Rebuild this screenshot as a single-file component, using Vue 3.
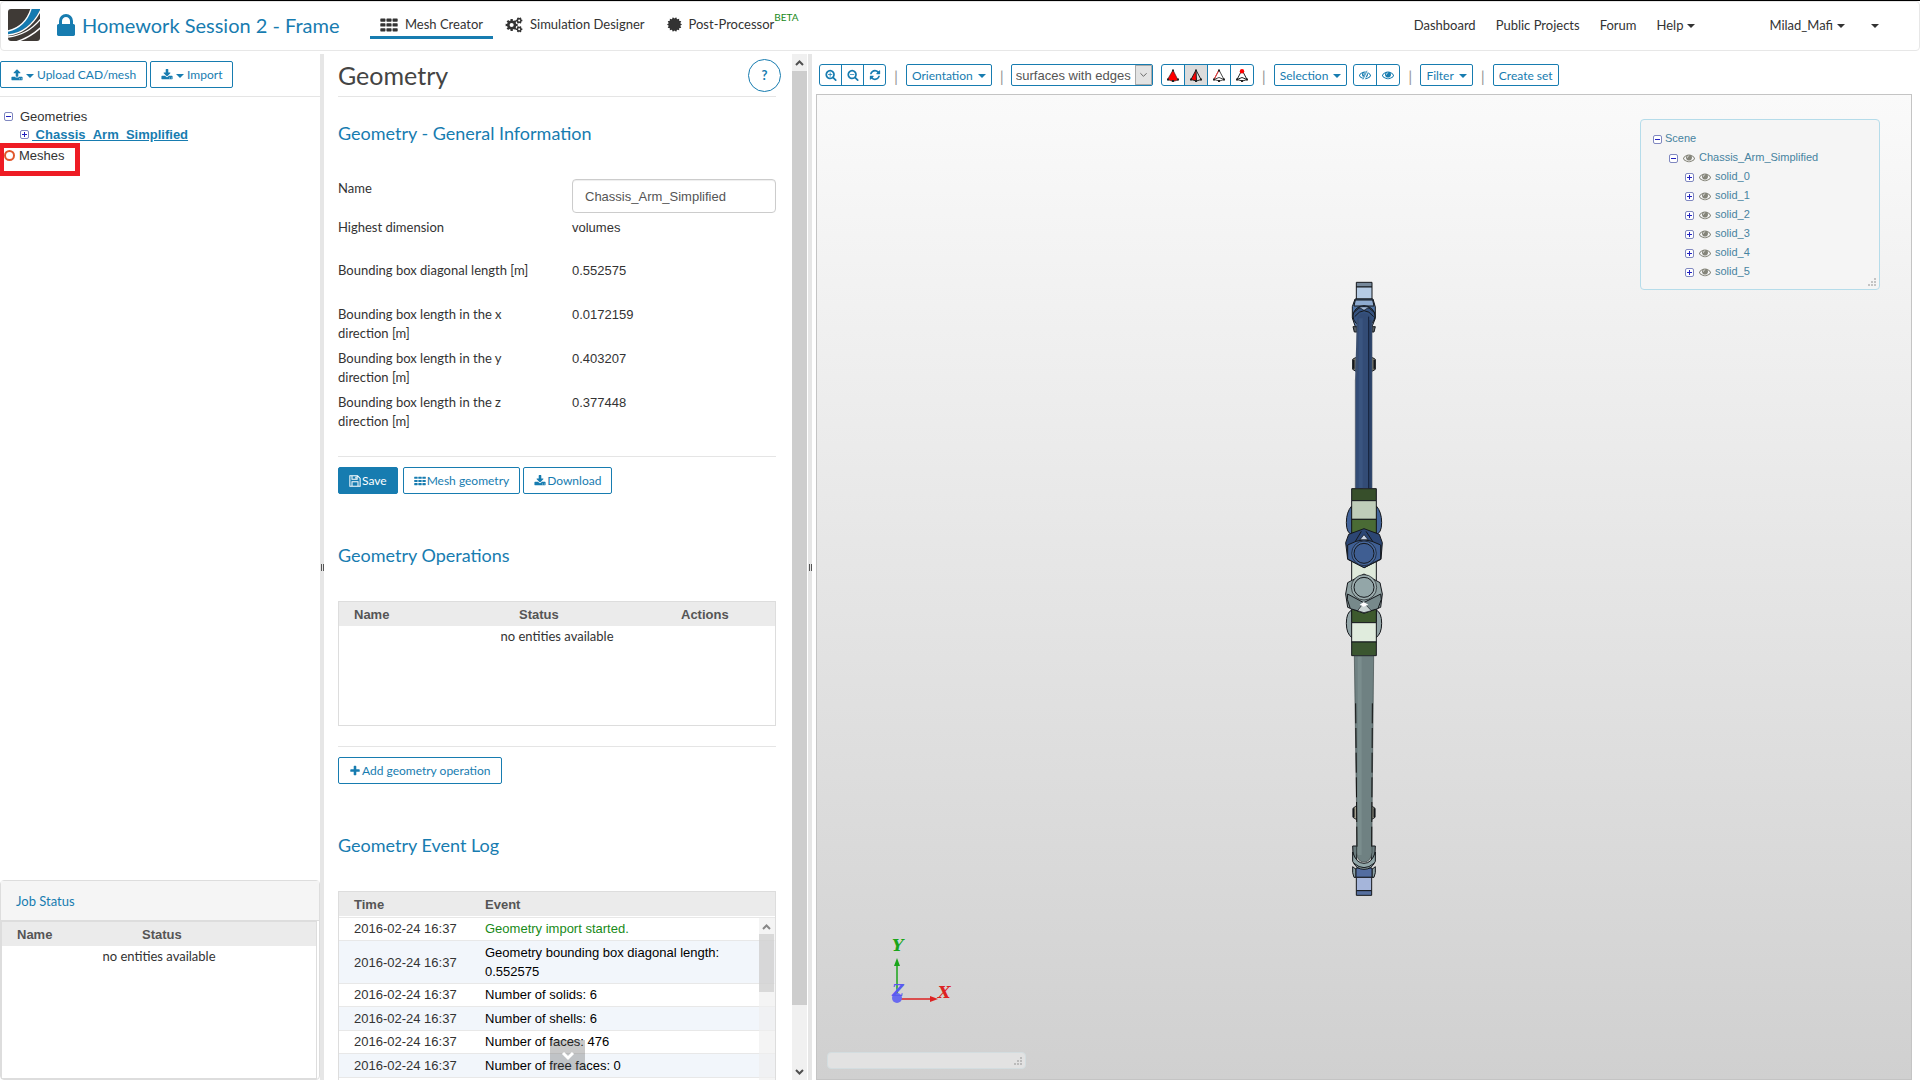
<script setup>
import { h, ref } from 'vue'

const paths = {
  lock: 'M320 768h512v-192q0-106-75-181t-181-75-181 75-75 181v192zm832 96v576q0 40-28 68t-68 28h-960q-40 0-68-28t-28-68v-576q0-40 28-68t68-28h32v-192q0-184 132-316t316-132 316 132 132 316v192h32q40 0 68 28t28 68z',
  upload: 'M1344 1472q0-26-19-45t-45-19-45 19-19 45 19 45 45 19 45-19 19-45zm256 0q0-26-19-45t-45-19-45 19-19 45 19 45 45 19 45-19 19-45zm128-224v320q0 40-28 68t-68 28h-1472q-40 0-68-28t-28-68v-320q0-40 28-68t68-28h427q21 56 70.5 92t110.5 36h256q61 0 110.5-36t70.5-92h427q40 0 68 28t28 68zm-325-648q-17 40-59 40h-256v448q0 26-19 45t-45 19h-256q-26 0-45-19t-19-45v-448h-256q-42 0-59-40-17-39 14-69l448-448q18-19 45-19t45 19l448 448q31 30 14 69z',
  download: 'M1344 1344q0-26-19-45t-45-19-45 19-19 45 19 45 45 19 45-19 19-45zm256 0q0-26-19-45t-45-19-45 19-19 45 19 45 45 19 45-19 19-45zm128-224v320q0 40-28 68t-68 28h-1472q-40 0-68-28t-28-68v-320q0-40 28-68t68-28h465l135 136q58 56 136 56t136-56l136-136h464q40 0 68 28t28 68zm-325-569q17 41-14 70l-448 448q-18 19-45 19t-45-19l-448-448q-31-29-14-70 17-39 59-39h256v-448q0-26 19-45t45-19h256q26 0 45 19t19 45v448h256q42 0 59 39z',
  zoomIn: 'M1088 800v64q0 13-9.5 22.5t-22.5 9.5h-224v224q0 13-9.5 22.5t-22.5 9.5h-64q-13 0-22.5-9.5t-9.5-22.5v-224h-224q-13 0-22.5-9.5t-9.5-22.5v-64q0-13 9.5-22.5t22.5-9.5h224v-224q0-13 9.5-22.5t22.5-9.5h64q13 0 22.5 9.5t9.5 22.5v224h224q13 0 22.5 9.5t9.5 22.5zm128 32q0-185-131.5-316.5t-316.5-131.5-316.5 131.5-131.5 316.5 131.5 316.5 316.5 131.5 316.5-131.5 131.5-316.5zm512 832q0 53-37.5 90.5t-90.5 37.5q-54 0-90-38l-343-342q-179 124-399 124-143 0-273.5-55.5t-225-150-150-225-55.5-273.5 55.5-273.5 150-225 225-150 273.5-55.5 273.5 55.5 225 150 150 225 55.5 273.5q0 220-124 399l343 343q37 37 37 90z',
  zoomOut: 'M1088 800v64q0 13-9.5 22.5t-22.5 9.5h-576q-13 0-22.5-9.5t-9.5-22.5v-64q0-13 9.5-22.5t22.5-9.5h576q13 0 22.5 9.5t9.5 22.5zm128 32q0-185-131.5-316.5t-316.5-131.5-316.5 131.5-131.5 316.5 131.5 316.5 316.5 131.5 316.5-131.5 131.5-316.5zm512 832q0 53-37.5 90.5t-90.5 37.5q-54 0-90-38l-343-342q-179 124-399 124-143 0-273.5-55.5t-225-150-150-225-55.5-273.5 55.5-273.5 150-225 225-150 273.5-55.5 273.5 55.5 225 150 150 225 55.5 273.5q0 220-124 399l343 343q37 37 37 90z',
  refresh: 'M1639 1056q0 5-1 7-64 268-268 434.5t-478 166.5q-146 0-282.5-55t-243.5-157l-129 129q-19 19-45 19t-45-19-19-45v-448q0-26 19-45t45-19h448q26 0 45 19t19 45-19 45l-137 137q71 66 161 102t187 36q134 0 250-65t186-179q11-17 53-117 8-23 30-23h192q13 0 22.5 9.5t9.5 22.5zm25-800v448q0 26-19 45t-45 19h-448q-26 0-45-19t-19-45 19-45l138-138q-148-137-349-137-134 0-250 65t-186 179q-11 17-53 117-8 23-30 23h-199q-13 0-22.5-9.5t-9.5-22.5v-7q65-268 270-434.5t480-166.5q146 0 284 55.5t245 156.5l130-129q19-19 45-19t45 19 19 45z',
  eye: 'M1664 960q-152-236-381-353 61 104 61 225 0 185-131.5 316.5t-316.5 131.5-316.5-131.5-131.5-316.5q0-121 61-225-229 117-381 353 133 205 333.5 326.5t434.5 121.5 434.5-121.5 333.5-326.5zm-720-384q0-20-14-34t-34-14q-125 0-214.5 89.5t-89.5 214.5q0 20 14 34t34 14 34-14 14-34q0-86 61-147t147-61q20 0 34-14t14-34zm848 384q0 34-20 69-140 230-376.5 368.5t-499.5 138.5-499.5-139-376.5-368q-20-35-20-69t20-69q140-229 376.5-368t499.5-139 499.5 139 376.5 368q20 35 20 69z',
  th: 'M96 256h384q64 0 64 64v192q0 64-64 64h-384q-64 0-64-64v-192q0-64 64-64zm608 0h384q64 0 64 64v192q0 64-64 64h-384q-64 0-64-64v-192q0-64 64-64zm608 0h384q64 0 64 64v192q0 64-64 64h-384q-64 0-64-64v-192q0-64 64-64zM96 736h384q64 0 64 64v192q0 64-64 64h-384q-64 0-64-64v-192q0-64 64-64zm608 0h384q64 0 64 64v192q0 64-64 64h-384q-64 0-64-64v-192q0-64 64-64zm608 0h384q64 0 64 64v192q0 64-64 64h-384q-64 0-64-64v-192q0-64 64-64zM96 1216h384q64 0 64 64v192q0 64-64 64h-384q-64 0-64-64v-192q0-64 64-64zm608 0h384q64 0 64 64v192q0 64-64 64h-384q-64 0-64-64v-192q0-64 64-64zm608 0h384q64 0 64 64v192q0 64-64 64h-384q-64 0-64-64v-192q0-64 64-64z',
  plus: 'M1600 736v192q0 40-28 68t-68 28h-416v416q0 40-28 68t-68 28h-192q-40 0-68-28t-28-68v-416h-416q-40 0-68-28t-28-68v-192q0-40 28-68t68-28h416v-416q0-40 28-68t68-28h192q40 0 68 28t28 68v416h416q40 0 68 28t28 68z'
}

const Icon = (props) =>
  h('svg', { viewBox: props.box || '0 0 1792 1792', 'aria-hidden': 'true' }, [h('path', { d: paths[props.name], fill: 'currentColor' })])
Icon.props = ['name', 'box']

// Toothed outline used by the gear and the seal
function teeth(cx, cy, outer, inner, count, flat) {
  const pts = []
  const step = (Math.PI * 2) / count
  for (let i = 0; i < count; i++) {
    const a = i * step
    for (const [o, r] of flat
      ? [[-0.25, outer], [0.25, outer], [0.3, inner], [0.7, inner]]
      : [[0, outer], [0.5, inner]]) {
      pts.push(`${(cx + Math.cos(a + o * step) * r).toFixed(2)} ${(cy + Math.sin(a + o * step) * r).toFixed(2)}`)
    }
  }
  return 'M' + pts.join('L') + 'Z'
}
const hole = (cx, cy, r) => `M${cx - r} ${cy}a${r} ${r} 0 1 0 ${2 * r} 0a${r} ${r} 0 1 0 ${-2 * r} 0Z`
const gears =
  teeth(6.5, 8.5, 6.5, 5, 8, true) + hole(6.5, 8.5, 2.2) +
  teeth(14.5, 3.7, 3.5, 2.7, 6, true) + hole(14.5, 3.7, 1.1) +
  teeth(14.5, 13, 3.5, 2.7, 6, true) + hole(14.5, 13, 1.1)
const seal = teeth(8, 8, 8, 6.3, 14, false)

const name = ref('Chassis_Arm_Simplified')
const display = ref('surfaces with edges')
const facts = [
  ['Highest dimension', 'volumes'],
  ['Bounding box diagonal length [m]', '0.552575'],
  ['Bounding box length in the x direction [m]', '0.0172159'],
  ['Bounding box length in the y direction [m]', '0.403207'],
  ['Bounding box length in the z direction [m]', '0.377448']
]
const events = [
  'Geometry import started.',
  'Geometry bounding box diagonal length: 0.552575',
  'Number of solids: 6',
  'Number of shells: 6',
  'Number of faces: 476',
  'Number of free faces: 0'
]
const solids = ['solid_0', 'solid_1', 'solid_2', 'solid_3', 'solid_4', 'solid_5']
</script>

<template>
  <div class="page">
    <header class="topbar">
      <svg class="logo" viewBox="0 0 96 96" aria-hidden="true">
        <rect width="96" height="96" rx="9" fill="#3f3a36" />
        <path d="M0 66C34 58 58 34 69 0H96V3C76 44 44 72 0 77Z" fill="#147ab0" />
        <path d="M0 66C34 58 58 34 69 0M0 78C44 74 76 46 98 4M0 84C42 80 72 62 98 30M26 98C52 90 76 76 98 56" fill="none" stroke="#fff" stroke-width="4" />
      </svg>
      <Icon class="lock" name="lock" box="0 128 1152 1408" />
      <a class="project" href="#">Homework Session 2 - Frame</a>
      <nav class="modes">
        <a class="mode on" href="#"><Icon class="mode-icon" name="th" box="0 200 1792 1400" />Mesh Creator</a>
        <a class="mode" href="#"><svg class="mode-icon" viewBox="0 0 18 17" aria-hidden="true"><path :d="gears" fill="currentColor" fill-rule="evenodd" /></svg>Simulation Designer</a>
        <a class="mode" href="#"><svg class="seal" viewBox="0 0 16 16" aria-hidden="true"><path :d="seal" fill="currentColor" /></svg>Post-Processor<sup class="beta">BETA</sup></a>
      </nav>
      <nav class="links">
        <a href="#">Dashboard</a>
        <a href="#">Public Projects</a>
        <a href="#">Forum</a>
        <a href="#">Help<i class="caret"></i></a>
        <a class="user" href="#">Milad_Mafi<i class="caret"></i></a>
        <a class="more" href="#" aria-label="More"><i class="caret"></i></a>
      </nav>
    </header>

    <main class="columns">
      <aside class="left">
        <div class="left-tools">
          <button class="btn"><Icon class="ic" name="upload" /><i class="caret"></i>Upload CAD/mesh</button>
          <button class="btn"><Icon class="ic" name="download" /><i class="caret"></i>Import</button>
        </div>
        <div class="tree">
          <div class="node"><i class="box minus"></i>Geometries</div>
          <div class="node child"><i class="box"></i><a class="geo" href="#">&nbsp;Chassis_Arm_Simplified</a></div>
          <div class="node meshes"><i class="ring"></i>Meshes</div>
        </div>
        <section class="jobs">
          <h4>Job Status</h4>
          <div class="grid-box jobs-box">
            <table>
              <thead><tr><th class="job-name">Name</th><th>Status</th></tr></thead>
              <tbody><tr><td class="none" colspan="2">no entities available</td></tr></tbody>
            </table>
          </div>
        </section>
      </aside>

      <div class="splitter"><i class="grip"></i></div>

      <section class="middle">
        <div class="sheet">
          <div class="sheet-head">
            <h1>Geometry</h1>
            <button class="help" aria-label="Help">?</button>
          </div>
          <h2>Geometry - General Information</h2>
          <div class="form">
            <label for="geo-name">Name</label>
            <input id="geo-name" v-model="name" type="text" />
            <template v-for="f in facts" :key="f[0]">
              <span class="key">{{ f[0] }}</span>
              <span class="val">{{ f[1] }}</span>
            </template>
          </div>
          <div class="actions">
            <button class="btn solid"><svg class="ic" viewBox="0 0 14 14" aria-hidden="true"><path d="M1 1H10L13 4V13H1ZM3.500 1V5H9.500V1M3.500 13V8H10.500V13M8 2V4" fill="none" stroke="currentColor" stroke-width="1.200" /></svg>Save</button>
            <button class="btn"><Icon class="ic" name="th" box="0 200 1792 1400" />Mesh geometry</button>
            <button class="btn"><Icon class="ic" name="download" />Download</button>
          </div>

          <h2>Geometry Operations</h2>
          <div class="grid-box ops">
            <table>
              <thead><tr><th class="op-name">Name</th><th class="op-status">Status</th><th>Actions</th></tr></thead>
              <tbody><tr><td class="none" colspan="3">no entities available</td></tr></tbody>
            </table>
          </div>
          <div class="actions add">
            <button class="btn"><Icon class="ic" name="plus" />Add geometry operation</button>
          </div>

          <h2>Geometry Event Log</h2>
          <div class="grid-box log">
            <table>
              <thead><tr><th class="time">Time</th><th>Event</th></tr></thead>
              <tbody>
                <tr v-for="(e, i) in events" :key="e">
                  <td class="stamp">2016-02-24 16:37</td>
                  <td class="event" :class="{ good: i === 0 }">{{ e }}</td>
                </tr>
              </tbody>
            </table>
            <div class="log-scroll">
              <svg viewBox="0 0 15 16" aria-hidden="true"><path d="M4 11L7.500 7.500L11 11" fill="none" stroke="#888" stroke-width="2" /></svg>
              <div class="log-thumb"></div>
            </div>
          </div>
        </div>
        <button class="scroll-hint" aria-label="Scroll down"><svg viewBox="0 0 14 10" aria-hidden="true"><path d="M2 2L7 7L12 2" fill="none" stroke="#fff" stroke-width="3" /></svg></button>
        <div class="scrollbar">
          <svg viewBox="0 0 15 17" aria-hidden="true"><path d="M4 11L7.500 7.500L11 11" fill="none" stroke="#505050" stroke-width="2" /></svg>
          <div class="thumb"></div>
          <svg viewBox="0 0 15 17" aria-hidden="true"><path d="M4 7L7.500 10.500L11 7" fill="none" stroke="#505050" stroke-width="2" /></svg>
        </div>
      </section>

      <div class="splitter"><i class="grip"></i></div>

      <section class="viewer">
        <div class="toolbar">
          <div class="group">
            <button aria-label="Zoom in"><Icon class="gi" name="zoomIn" /></button>
            <button aria-label="Zoom out"><Icon class="gi" name="zoomOut" /></button>
            <button aria-label="Refresh"><Icon class="gi" name="refresh" /></button>
          </div>
          <span class="bar">|</span>
          <button class="btn sm">Orientation<i class="caret"></i></button>
          <span class="bar">|</span>
          <div class="pick">
            <select v-model="display" aria-label="Display mode"><option>surfaces with edges</option></select>
            <svg viewBox="0 0 17 20" aria-hidden="true"><path d="M5 8L8.500 11.500L12 8" fill="none" stroke="#555" /></svg>
          </div>
          <div class="group wide">
            <button aria-label="Select volumes"><svg class="tet" viewBox="0 0 14 13"><path d="M7 1L12 11L7 12.500L1.500 10.500Z" fill="#f00" stroke="#222" stroke-width=".6" /><path d="M1 9.500h2v2h-2zM6 11h2v2h-2zM11 9.500h2v2h-2zM6 .5h2v2h-2z" fill="#222" /></svg></button>
            <button class="on" aria-label="Select faces"><svg class="tet" viewBox="0 0 14 13"><path d="M7 1L7.500 12L2 10.500Z" fill="#f00" /><path d="M7 1L12 10.500L7.500 12L2 10.500ZM7 1L7.500 12" fill="none" stroke="#222" /><path d="M1 9.500h2v2h-2zM6 11h2v2h-2zM11 9.500h2v2h-2zM6 .5h2v2h-2z" fill="#222" /></svg></button>
            <button aria-label="Select edges"><svg class="tet" viewBox="0 0 14 13"><path d="M7 1L12 10.500L7.500 12L2 10.500ZM2 10.500L7 8.500L12 10.500" fill="none" stroke="#333" stroke-width=".9" /><path d="M7 1L2 10.500" stroke="#f33" /><path d="M1 9.500h2v2h-2zM6 11h2v2h-2zM11 9.500h2v2h-2zM6 .5h2v2h-2z" fill="#222" /></svg></button>
            <button aria-label="Select vertices"><svg class="tet" viewBox="0 0 14 13"><path d="M7 1L12 10.500L7.500 12L2 10.500ZM2 10.500L7 8.500L12 10.500" fill="none" stroke="#222" /><path d="M1 9.500h2v2h-2zM6 11h2v2h-2zM11 9.500h2v2h-2z" fill="#222" /><circle cx="7" cy="2.200" r="2.200" fill="#f00" /></svg></button>
          </div>
          <span class="bar">|</span>
          <button class="btn sm">Selection<i class="caret"></i></button>
          <div class="group eyes">
            <button aria-label="Hide"><svg class="gi" viewBox="0 0 1792 1792"><path :d="paths.eye" fill="currentColor" /><path d="M1250 260L640 1640" stroke="#fff" stroke-width="300" /><path d="M1200 260L590 1560" stroke="currentColor" stroke-width="120" /></svg></button>
            <button aria-label="Show"><Icon class="gi" name="eye" /></button>
          </div>
          <span class="bar">|</span>
          <button class="btn sm">Filter<i class="caret"></i></button>
          <span class="bar">|</span>
          <button class="btn sm">Create set</button>
        </div>

        <div class="canvas">
          <svg class="model" viewBox="42 30 180 1848" aria-label="Chassis arm model">
            <g stroke="#15181c" stroke-width="3">
              <!-- upper end -->
              <path d="M99 170h12v16h-8zM156 170h10l-4 16h-6z" fill="#555c60" />
              <path d="M98 268l8-5h10v40h-10l-8-5zM166 268l-8-5h-8v40h8l8-5z" fill="#77756a" />
              <path d="M101 270v26M163 270v26" stroke-width="5" />
              <path d="M109 37h47v14h-47z" fill="#76889a" />
              <path d="M109 51h47v36h-47z" fill="#b5cbe4" />
              <path d="M105 87h54l7 24v34l-10 25h-50l-9-26v-34z" fill="#5275a5" />
              <path d="M106 90h52l4 18h-60z" fill="#8eaacf" />
              <ellipse cx="132" cy="138" rx="33" ry="31" fill="#35527f" />
              <path d="M101 128q30-36 63 0M104 140q28-36 57 0" fill="none" />
              <path d="M118 112l14 9 14-9" fill="#a9bedb" stroke-width="2" />
              <path d="M111 150q3-20 21-20t24 20V655H106V300Z" fill="#334c76" stroke="none" />
              <path d="M111 150V300L106 330V655M156 150V655" fill="none" stroke-width="2" stroke="#4a5563" />
              <path d="M151 150V655" stroke="#2b4268" stroke-width="7" />
              <path d="M146 140V655" fill="none" stroke="#14213a" />
              <path d="M122 145V655" stroke="#3a5580" stroke-width="12" />
              <!-- centre joint -->
              <path d="M95 708q-16 18-16 50t18 36zM169 708q16 18 16 50t-18 36z" fill="#43649a" />
              <path d="M95 1020q-16 8-16 40t18 44zM169 1020q16 8 16 40t-18 44z" fill="#93a5a7" />
              <path d="M95 656h74v36h-74z" fill="#374f2b" />
              <path d="M95 692h74v56h-74z" fill="#bfcdb9" />
              <path d="M95 748h74v42h-74z" fill="#4a6b35" />
              <path d="M95 790h74v225h-74z" fill="#dfeadb" />
              <path d="M95 1012h74v46h-74z" fill="#3d5a2d" />
              <path d="M95 1058h74v58h-74z" fill="#e0ecdd" />
              <path d="M95 1116h74v41h-74z" fill="#3b5630" />
              <path d="M132 776l46 17 9 25-4 50-50 25-50-25-6-50 9-25z" fill="#2c4674" />
              <path d="M83 825l25-11 24-5 24 5 26 11v42l-50 26-49-26z" fill="#3f5f94" />
              <path d="M124 784l-18 30M138 784l20 30" fill="none" />
              <path d="M132 794l12 15h-24z" fill="#cbd5e5" stroke-width="2" />
              <circle cx="132" cy="850" r="37" fill="#47689d" stroke-width="2" />
              <circle cx="132" cy="850" r="30" fill="#3f5e92" />
              <path d="M132 912l48 26 7 34-5 40-50 18-49-18-6-40 6-34z" fill="#8fa1a2" />
              <path d="M83 972l48 26 51-26 2 16-10 28-42 12-41-12-9-28z" fill="#77898b" />
              <path d="M131 998l-18 24 19 6 22-6z" fill="#c9d3d2" stroke-width="2" />
              <path d="M131 996l-12 8 12 6 14-6z" fill="#fff" stroke="none" />
              <circle cx="132" cy="952" r="38" fill="#9cadae" stroke-width="2" />
              <circle cx="132" cy="952" r="30" fill="#93a6a8" />
              <!-- lower tube and end -->
              <path d="M99 1615l8-6h10v38h-10l-8-5zM165 1615l-8-6h-8v38h8l8-5z" fill="#a39f8e" />
              <path d="M101 1615v26M163 1615v26" stroke-width="5" />
              <path d="M98 1728h12v60l-10-14zM166 1728h-12v60l10-14z" fill="#6b7c7e" />
              <path d="M98 1790l10 8v24h-6l-4-14zM166 1790l-10 8v24h6l4-14z" fill="#8a9fa3" />
              <path d="M108 1794h48v28h-48z" fill="#536da0" />
              <path d="M109 1822h46v40h-46z" fill="#a5b5da" />
              <path d="M109 1862h46v14h-46z" fill="#566f9f" />
              <path d="M98 1746q10 34 34 34t34-34v28q-10 24-34 24t-34-24z" fill="#91a6a8" />
              <path d="M103 1158h58l-5 480v110q-4 28-24 28t-22-28V1638Z" fill="#6f8182" stroke="#3d4849" stroke-width="2" />
              <path d="M119 1160V1755" stroke="#7a8d8d" stroke-width="12" />
              <path d="M107 1300L111 1740M157 1300L155 1740" stroke="#111" stroke-dasharray="60 14" />
              <path d="M102 1780q30 26 60 0" fill="none" />
            </g>
          </svg>

          <svg class="axes" viewBox="0 0 70 76" aria-hidden="true">
            <path d="M9 60V26" stroke="#1aa51a" stroke-width="1.500" /><path d="M6 30L9 22L12 30Z" fill="#1aa51a" />
            <path d="M9 63H46" stroke="#d22" stroke-width="1.500" /><path d="M42 60L50 63L42 66Z" fill="#d22" />
            <circle cx="9" cy="62" r="5" fill="#6a6af0" />
            <text x="4" y="15" fill="#1aa51a">Y</text>
            <text x="50" y="62" fill="#d22">X</text>
            <text x="4" y="60" fill="#5a5af0">Z</text>
          </svg>

          <div class="scene">
            <div class="srow"><i class="box minus"></i>Scene</div>
            <div class="srow l1"><i class="box minus"></i><Icon class="seye" name="eye" />Chassis_Arm_Simplified</div>
            <div v-for="s in solids" :key="s" class="srow l2"><i class="box"></i><Icon class="seye" name="eye" />{{ s }}</div>
            <svg class="resize" viewBox="0 0 8 8" aria-hidden="true"><path d="M6 0h2v2h-2zM3 3h2v2h-2zM6 3h2v2h-2zM0 6h2v2h-2zM3 6h2v2h-2zM6 6h2v2h-2z" fill="#c4c4c4" /></svg>
          </div>
          <div class="message">
            <svg class="resize" viewBox="0 0 8 8" aria-hidden="true"><path d="M6 0h2v2h-2zM3 3h2v2h-2zM6 3h2v2h-2zM0 6h2v2h-2zM3 6h2v2h-2zM6 6h2v2h-2z" fill="#bbb" /></svg>
          </div>
        </div>
      </section>
    </main>
    <div class="mark" aria-hidden="true"></div>
  </div>
</template>

<style>
body { margin: 0; overflow: hidden; }
</style>

<style scoped>
* { box-sizing: border-box; }
.page { position: relative; display: flex; flex-direction: column; height: 100vh; border-top: 1px solid #000; background: #fff; color: #333; font: 13px/19px Lato, sans-serif; }
a { color: inherit; text-decoration: none; }
button, input, select { font: inherit; }
h1, h2, h4 { margin: 0; font-weight: 400; }
.caret { display: inline-block; margin-top: 2px; border: 4px solid transparent; border-top-color: currentColor; border-bottom: 0; }

.topbar { display: flex; align-items: center; flex: none; height: 50px; padding: 0 0 2px 7px; border: 1px solid #e7e7e7; border-radius: 4px; }
.logo { width: 32px; height: 32px; margin-right: 17px; }
.lock { width: 18px; height: 22px; margin-right: 7px; color: #177cb0; }
.project { width: 288px; color: #177cb0; font-size: 20px; line-height: 24px; white-space: nowrap; }
.modes { display: flex; }
.mode { display: flex; align-items: center; height: 30px; padding: 4px 10px 0; margin-top: -4px; margin-bottom: -2px; border-bottom: 3px solid transparent; }
.mode.on { border-color: #177cb0; }
.mode-icon { width: 18px; height: 16px; margin-right: 7px; }
.mode + .mode { margin-left: 2px; }
.seal { width: 15px; height: 15px; margin-right: 7px; }
.beta { color: #188a18; font-size: 10px; line-height: 10px; margin-top: -16px; }
.links { display: flex; margin-left: auto; }
.links a { display: flex; align-items: center; margin-right: 20px; }
.links .caret { margin-left: 4px; }
.links .user { margin-left: 54px; margin-right: 22px; }
.links .more { margin-right: 40px; }

.columns { display: flex; flex: 1; min-height: 0; padding-top: 3px; }
.splitter { display: flex; align-items: center; justify-content: flex-end; flex: none; width: 4px; background: #e6e6e6; }
.grip { width: 3px; height: 7px; border: solid #555; border-width: 0 1px; }

.btn { display: inline-flex; align-items: center; gap: 1px; height: 27px; padding: 0 10px; border: 1px solid #177cb0; border-radius: 2px; background: #fff; color: #177cb0; font-size: 12px; white-space: nowrap; }
.btn.solid { background: #177cb0; color: #fff; }
.btn.sm { height: 22px; padding: 0 5px; }
.btn.sm .caret { margin-left: 4px; }
.ic { width: 12px; height: 12px; }

.left { display: flex; flex-direction: column; flex: none; width: 320px; }
.left-tools { display: flex; gap: 3px; height: 43px; padding-top: 7px; border-bottom: 1px solid #e5e5e5; }
.left-tools .btn { gap: 3px; }
.tree { padding: 10px 0 0 4px; font-family: "Liberation Sans", sans-serif; }
.node { display: flex; align-items: center; height: 18px; }
.child { padding-left: 16px; }
.meshes { margin-top: 3px; }
.geo { color: #177cb0; font-weight: 700; text-decoration: underline; }
.box { position: relative; flex: none; width: 9px; height: 9px; margin-right: 7px; border: 1px solid #8088c0; border-radius: 2px; background: #fff; }
.box::before, .box::after { content: ""; position: absolute; left: 1px; top: 3px; width: 5px; height: 1px; background: #2222c0; }
.box::after { left: 3px; top: 1px; width: 1px; height: 5px; }
.box.minus::after { display: none; }
.child .box { margin-right: 3px; }
.ring { width: 11px; height: 11px; margin-right: 4px; border: 2px solid #e0582c; border-radius: 50%; }
.mark { position: absolute; left: 0; top: 142px; width: 80px; height: 33px; border: 5px solid #ee1c24; border-left-width: 4px; }

.jobs { display: flex; flex-direction: column; height: 200px; margin-top: auto; padding-right: 2px; border: 1px solid #ddd; border-radius: 4px; }
.jobs h4 { height: 40px; margin-right: -2px; padding-left: 15px; background: #f5f5f5; border-bottom: 1px solid #ddd; color: #177cb0; font-size: 13px; line-height: 40px; }
.grid-box { position: relative; overflow: hidden; border: 1px solid #ddd; }
.grid-box table { width: 100%; border-collapse: collapse; table-layout: fixed; }
.grid-box th { height: 24px; padding: 0 0 0 15px; background: #ebebeb; color: #555; font-family: "Liberation Sans", sans-serif; font-size: 13px; text-align: left; }
.grid-box td { padding: 0; }
.grid-box td.none { height: 21px; text-align: center; }
.jobs-box { flex: 1; }
.job-name { width: 125px; }

.middle { position: relative; display: flex; flex: none; width: 484px; }
.sheet { flex: 1; overflow: hidden; padding: 0 16px 0 14px; }
.sheet-head { display: flex; align-items: center; justify-content: space-between; height: 43px; border-bottom: 1px solid #e5e5e5; }
h1 { color: #444; font-size: 25px; line-height: 32px; }
.help { width: 33px; height: 33px; margin-right: -5px; padding: 0; border: 1px solid #177cb0; border-radius: 50%; background: #fff; color: #177cb0; font-weight: 700; }
h2 { margin-top: 24px; color: #177cb0; font-size: 18px; line-height: 24px; }
.form { display: grid; grid-template-columns: 234px 1fr; grid-template-rows: 39px 43px repeat(4, 44px); margin-top: 34px; }
.form input { width: 100%; height: 34px; padding: 0 12px; border: 1px solid #ccc; border-radius: 4px; box-shadow: inset 0 1px 1px #eee; color: #555; font-family: "Liberation Sans", sans-serif; }
.key { padding-right: 30px; }
.val { font-family: "Liberation Sans", sans-serif; }
.actions { display: flex; gap: 3px; margin-top: 19px; padding-top: 10px; border-top: 1px solid #e5e5e5; }
.actions .solid { margin-right: 2px; }
.actions.add { margin-top: 20px; }
.actions + h2 { margin-top: 49px; }
.ops { height: 125px; margin-top: 34px; }
.op-name { width: 165px; }
.op-status { width: 162px; }
.log { height: 260px; margin-top: 34px; }
.log th.time { width: 131px; }
.log tbody::before { content: ""; display: block; height: 1px; }
.log tbody tr { border-top: 1px solid #e8e8e8; }
.log tbody tr:last-child { border-bottom: 1px solid #e8e8e8; }
.log tbody tr:nth-child(even) { background: #f2f6fb; }
.log td { padding: 1px 40px 2px 15px; font-family: "Liberation Sans", sans-serif; }
.log tr:nth-child(even) td { padding-top: 2px; }
.log td.stamp { padding-right: 0; }
.event { color: #000; }
.event.good { color: #188a18; }
.log-scroll { position: absolute; right: 0; top: 26px; bottom: 0; width: 16px; background: rgba(240, 240, 240, .7); }
.log-scroll svg { display: block; width: 15px; height: 16px; }
.log-thumb { width: 15px; height: 58px; background: rgba(190, 190, 190, .5); }
.scroll-hint { position: absolute; left: 226px; bottom: 10px; width: 35px; height: 30px; padding: 3px 0 0; border: 0; background: rgba(100, 100, 100, .35); }
.scroll-hint svg { width: 14px; height: 10px; }
.scrollbar { display: flex; flex-direction: column; flex: none; width: 15px; margin-right: 1px; background: #f0f0f0; }
.scrollbar svg { width: 15px; height: 17px; }
.thumb { height: 91%; margin-bottom: auto; background: #cdcdcd; }

.viewer { display: flex; flex-direction: column; flex: 1; min-width: 0; padding: 0 8px 0 4px; }
.toolbar { display: flex; align-items: center; flex: none; height: 40px; padding: 2px 0 0 3px; }
.group { display: flex; flex: none; width: 67px; border: 1px solid #177cb0; border-radius: 3px; }
.group button { display: flex; align-items: center; justify-content: center; flex: 1; height: 20px; padding: 0; border: 0; background: none; color: #177cb0; }
.group button + button { border-left: 1px solid #177cb0; }
.group.wide { width: 93px; }
.group.eyes { width: 47px; margin-left: 6px; }
.group .on { background: #dcdcdc; }
.gi { width: 12px; height: 12px; }
.tet { width: 14px; height: 13px; }
.bar { width: 20px; color: #999; font-size: 16px; text-align: center; }
.pick { display: flex; position: relative; width: 142px; height: 22px; margin-right: 8px; margin-left: -1px; }
.pick select { appearance: none; width: 100%; padding: 0 4px; border: 1px solid #177cb0; border-radius: 2px; background: #fff; color: #555; font-family: "Liberation Sans", sans-serif; }
.pick svg { position: absolute; right: 1px; top: 1px; width: 17px; height: 20px; border: 1px solid #aaa; background: #e3e3e3; pointer-events: none; }

.canvas { position: relative; display: flex; align-items: center; justify-content: center; flex: 1; min-height: 0; padding-top: 2px; border: 1px solid #c4c4c4; background: linear-gradient(#fafafa, #d0d0d0); }
.model { width: 60px; height: 616px; }
.axes { position: absolute; left: 71px; bottom: 67px; width: 70px; height: 76px; font: italic 700 16px "DejaVu Serif", serif; }
.scene { position: absolute; right: 31px; top: 24px; width: 240px; height: 171px; padding: 9px 12px; border: 1px solid #b5dcea; border-radius: 4px; background: #f5f5f5; color: #4783a0; font: 11px/19px "Liberation Sans", sans-serif; }
.srow { display: flex; align-items: center; height: 19px; }
.srow .box { margin: 2px 3px 0 0; }
.srow.l1 { padding-left: 16px; }
.srow.l2 { padding-left: 32px; }
.seye { width: 12px; height: 12px; margin: 0 4px 0 2px; color: #85857a; }
.resize { position: absolute; right: 3px; bottom: 3px; width: 8px; height: 8px; }
.message { position: absolute; left: 10px; bottom: 10px; width: 199px; height: 17px; border: 1px solid #d3dde0; border-radius: 4px; background: #e2e2e2; }
</style>
